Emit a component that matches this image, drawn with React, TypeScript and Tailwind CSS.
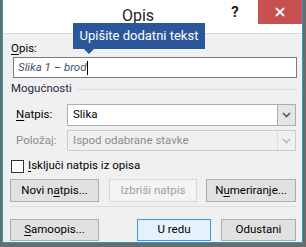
import React from "react";

function Btn({
  children,
  w,
  disabled,
  primary,
}: {
  children: React.ReactNode;
  w: string;
  disabled?: boolean;
  primary?: boolean;
}) {
  const base = "flex items-center justify-center text-[11.5px] leading-none border whitespace-nowrap";
  let tone = "bg-[#e1e1e1] border-[#adadad] text-black";
  if (disabled) tone = "bg-[#f4f4f4] border-[#d9d9d9] text-[#a0a0a0]";
  if (primary) tone = "bg-[#e5f1fb] border-[#3399ff] text-black";
  return <div className={`${base} ${tone} ${w}`}>{children}</div>;
}

function Chevron({ color }: { color: string }) {
  return (
    <svg width="9" height="6" viewBox="0 0 9 6">
      <path d="M1 1 L4.5 4.5 L8 1" fill="none" stroke={color} strokeWidth="1.6" />
    </svg>
  );
}

export default function App() {
  return (
    <div className="w-[306px] h-[247px] bg-[#6b6b6b] pl-[2px] font-['Roboto','Noto_Sans',sans-serif]">
      <div className="relative w-[301px] h-[243px] border border-t-0 border-[#1aa1c8] bg-[#f0f0f0] flex flex-col">
        {/* Title bar */}
        <div className="h-[34px] bg-white border-b border-[#d9d9d9] flex items-start">
          <div className="flex-1 h-[28px] flex items-end justify-center pl-[50px] text-[16px] text-[#222]">
            Opis
          </div>
          <div className="w-[24px] h-[24px] flex items-center justify-center text-[15px] font-bold text-[#222] mr-[11px]">
            ?
          </div>
          <div className="w-[44px] h-[24px] bg-[#c75050] flex items-center justify-center">
            <svg width="10" height="10" viewBox="0 0 10 10">
              <path d="M1 1 L9 9 M9 1 L1 9" stroke="white" strokeWidth="1.8" />
            </svg>
          </div>
        </div>

        {/* Body */}
        <div className="pl-[8px] pt-[6px] text-[11.5px] text-black">
          <div className="h-[16px] leading-[16px]">
            <span className="underline underline-offset-2">O</span>pis:
          </div>
          <div className="ml-[2px] mt-[1px] w-[284px] h-[21px] bg-white border border-[#7a7a7a] flex items-center pl-[4px] italic text-[11.5px] text-[#44546a]">
            Slika 1 – brod
            <span className="ml-[1px] w-[1px] h-[14px] bg-black" />
          </div>

          <div className="mt-[3px] flex items-center h-[16px]">
            <span className="text-[#1e2a44]">Mogućnosti</span>
            <div className="ml-[5px] flex-1 h-px bg-[#dcdcdc] mr-[5px]" />
          </div>

          <div className="mt-[7px] flex items-center h-[22px]">
            <span className="w-[56px] pl-[5px]">
              <span className="underline underline-offset-2">N</span>atpis:
            </span>
            <div className="w-[229px] h-[22px] bg-white border border-[#adadad] flex items-center">
              <span className="flex-1 pl-[5px]">Slika</span>
              <div className="w-[18px] h-[20px] bg-[#e5e5e5] border-l border-[#adadad] flex items-center justify-center">
                <Chevron color="#555" />
              </div>
            </div>
          </div>

          <div className="mt-[4px] flex items-center h-[21px] text-[#8d8d8d]">
            <span className="w-[56px] pl-[5px]">Položaj:</span>
            <div className="w-[229px] h-[21px] bg-[#f0f0f0] border border-[#cccccc] flex items-center">
              <span className="flex-1 pl-[5px]">Ispod odabrane stavke</span>
              <div className="w-[18px] h-[19px] border-l border-[#dcdcdc] flex items-center justify-center">
                <Chevron color="#b8b8b8" />
              </div>
            </div>
          </div>

          <div className="mt-[8px] flex items-center h-[14px]">
            <div className="w-[13px] h-[13px] bg-white border border-[#333]" />
            <span className="ml-[4px]">
              <span className="underline underline-offset-2">I</span>sključi natpis iz opisa
            </span>
          </div>

          <div className="mt-[6px] flex h-[23px] ml-[-1px]">
            <Btn w="w-[89px]">
              Novi n<span className="underline underline-offset-2">a</span>tpis...
            </Btn>
            <div className="w-[10px]" />
            <Btn w="w-[88px]" disabled>
              Izbriši natpis
            </Btn>
            <div className="w-[9px]" />
            <Btn w="w-[90px]">
              N<span className="underline underline-offset-2">u</span>meriranje...
            </Btn>
          </div>

          <div className="mt-[4px] ml-[-1px] w-[286px] h-px bg-[#dcdcdc]" />

          <div className="mt-[12px] flex h-[22px] ml-[-1px]">
            <Btn w="w-[89px]">
              <span className="underline underline-offset-2">S</span>amoopis...
            </Btn>
            <div className="w-[38px]" />
            <Btn w="w-[74px]" primary>
              U redu
            </Btn>
            <div className="w-[10px]" />
            <Btn w="w-[75px]">Odustani</Btn>
          </div>
        </div>

        {/* Tooltip */}
        <div className="absolute left-[70px] top-[23px] w-[132px] h-[26px] bg-[#2b579a] flex items-center justify-center whitespace-nowrap text-white text-[13px]">
          Upišite dodatni tekst
          <div className="absolute left-[11px] top-[26px] w-0 h-0 border-l-[5px] border-r-[5px] border-t-[5px] border-l-transparent border-r-transparent border-t-[#2b579a]" />
        </div>
      </div>
    </div>
  );
}
